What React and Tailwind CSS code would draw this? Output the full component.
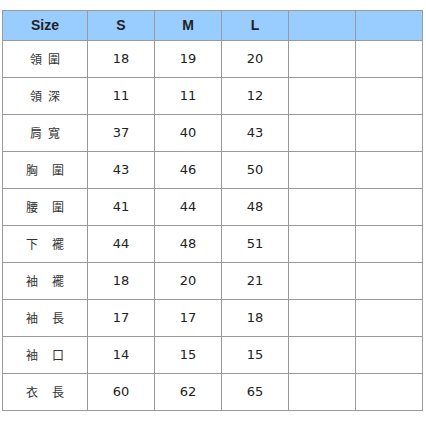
const COLS = ['S', 'M', 'L', '', '']

const ROWS = [
  { name: ['領', '圍'], gap: 'gap-[6px]', v: [18, 19, 20] },
  { name: ['領', '深'], gap: 'gap-[6px]', v: [11, 11, 12] },
  { name: ['肩', '寬'], gap: 'gap-[6px]', v: [37, 40, 43] },
  { name: ['胸', '圍'], gap: 'gap-[14px]', v: [43, 46, 50] },
  { name: ['腰', '圍'], gap: 'gap-[14px]', v: [41, 44, 48] },
  { name: ['下', '襬'], gap: 'gap-[14px]', v: [44, 48, 51] },
  { name: ['袖', '襬'], gap: 'gap-[14px]', v: [18, 20, 21] },
  { name: ['袖', '長'], gap: 'gap-[14px]', v: [17, 17, 18] },
  { name: ['袖', '口'], gap: 'gap-[14px]', v: [14, 15, 15] },
  { name: ['衣', '長'], gap: 'gap-[14px]', v: [60, 62, 65] },
]

export default function App() {
  return (
    <div className="w-[426px] h-[426px] bg-white pt-[10px] pl-[2px]">
      <table className="border-collapse table-fixed text-[#222]" style={{ width: 421 }}>
        <colgroup>
          <col className="w-[85px]" />
          {COLS.map((_, i) => <col key={i} className="w-[67px]" />)}
        </colgroup>
        <thead>
          <tr className="h-[30px] bg-[#99ccff]">
            <th className="border border-[#9a9a9a] p-0 text-[14px] font-bold font-['Liberation_Sans',sans-serif]">Size</th>
            {COLS.map((c, i) => (
              <th key={i} className="border border-[#9a9a9a] p-0 text-[14px] font-bold font-['Liberation_Sans',sans-serif]">{c}</th>
            ))}
          </tr>
        </thead>
        <tbody>
          {ROWS.map((r, i) => (
            <tr key={i} className="h-[37px]">
              <td className="border border-[#9a9a9a] p-0">
                <div className={`flex justify-center ${r.gap} text-[12px] text-[#333] font-['Noto_Sans_CJK_TC',sans-serif]`}>
                  <span>{r.name[0]}</span>
                  <span>{r.name[1]}</span>
                </div>
              </td>
              {r.v.map((n, j) => (
                <td key={j} className="border border-[#9a9a9a] p-0 text-center text-[13px] font-['DejaVu_Sans',sans-serif]">{n}</td>
              ))}
              <td className="border border-[#9a9a9a] p-0" />
              <td className="border border-[#9a9a9a] p-0" />
            </tr>
          ))}
        </tbody>
      </table>
    </div>
  )
}
